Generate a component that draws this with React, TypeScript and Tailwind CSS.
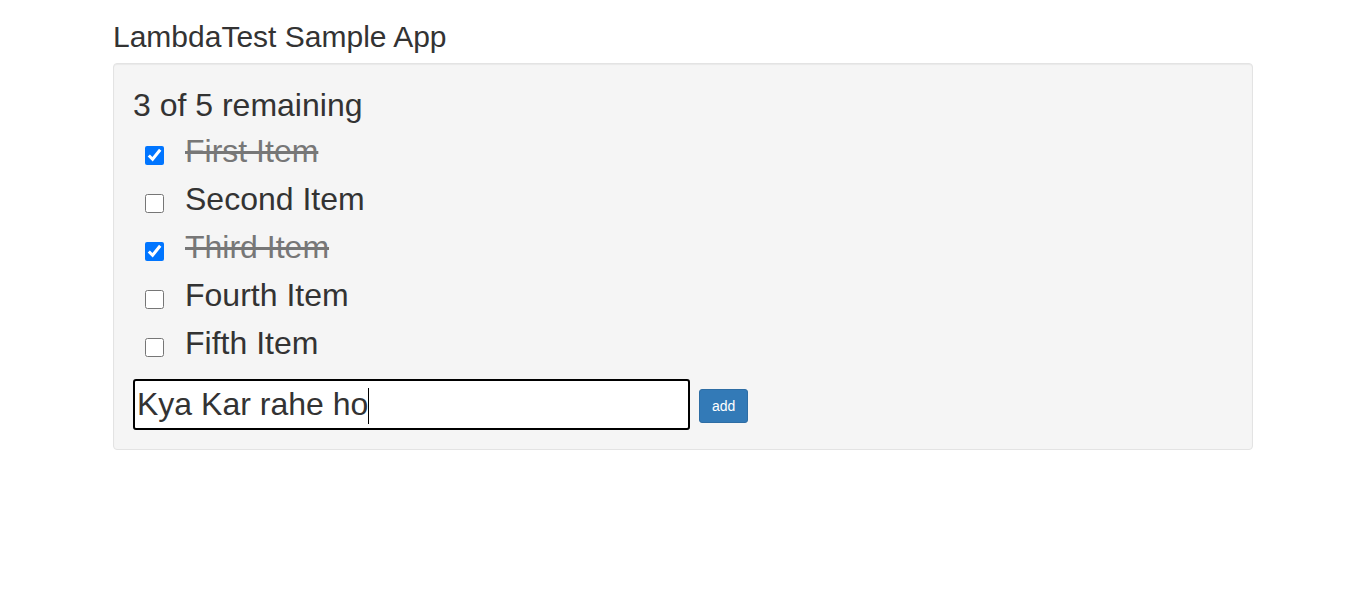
import React from "react";

const items = [
  { text: "First Item", done: true },
  { text: "Second Item", done: false },
  { text: "Third Item", done: true },
  { text: "Fourth Item", done: false },
  { text: "Fifth Item", done: false },
];

export default function App() {
  return (
    <div className="min-h-[612px] bg-white">
      <div className="w-[1140px] mx-auto font-['Liberation_Sans',Arial,sans-serif] text-[#333]">
        <h2 className="pt-5 pb-2.5 text-[30px] leading-[33px] font-normal">LambdaTest Sample App</h2>
        <div className="bg-[#f5f5f5] border border-[#e3e3e3] rounded-[4px] p-[19px] shadow-[inset_0_1px_1px_rgba(0,0,0,0.05)]">
          <div className="text-[32px] leading-[44px]">3 of 5 remaining</div>
          <ul>
            {items.map((it) => (
              <li key={it.text} className="flex items-center h-12 text-[32px] leading-[48px]">
                <input
                  type="checkbox"
                  defaultChecked={it.done}
                  className="m-0 ml-[12px] mt-2 w-[19px] h-[19px] shrink-0"
                />
                <span className={"ml-[21px] " + (it.done ? "text-[#777] line-through" : "")}>{it.text}</span>
              </li>
            ))}
          </ul>
          <div className="flex items-center mt-3">
            <div
              role="textbox"
              className="w-[557px] h-[51px] border-2 border-black rounded-[3px] bg-white pl-[2px] flex items-center text-[32px] text-[#333]"
            >
              <span className="-mt-[1px]">Kya Kar rahe ho</span>
              <span className="w-px h-[36px] bg-black mt-[2px]" />
            </div>
            <button className="ml-[9px] mt-[3px] h-[34px] px-[12px] text-[14px] leading-none bg-[#337ab7] border border-[#2e6da4] text-white rounded-[3px]">
              add
            </button>
          </div>
        </div>
      </div>
    </div>
  );
}
